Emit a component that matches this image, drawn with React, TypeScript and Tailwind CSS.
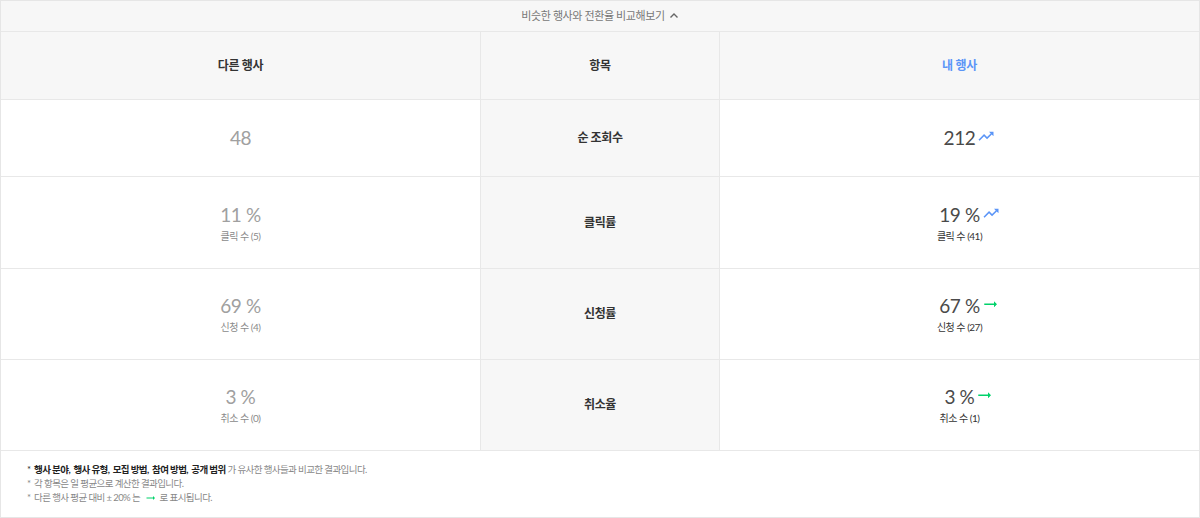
import React from "react";

const font = { fontFamily: "Lato, 'Noto Sans CJK KR', 'Noto Sans', sans-serif" };

function TrendUp() {
  return (
    <svg width="18" height="18" viewBox="0 0 24 24" className="absolute left-full top-1/2 -translate-y-[60%] ml-[2px]">
      <path d="M16 6l2.29 2.29-4.88 4.88-4-4L2 16.59 3.41 18l6-6 4 4 6.3-6.29L22 12V6z" fill="#5b95f7" />
    </svg>
  );
}

function ArrowRight() {
  return (
    <svg width="18" height="18" viewBox="0 0 24 24" className="absolute left-full top-1/2 -translate-y-[60%] ml-[2px]">
      <path d="M16.01 11H3v2h13.01v3L20 12l-3.99-4z" fill="#00d26a" />
    </svg>
  );
}

type Row = {
  label: string;
  other: string;
  otherSub?: string;
  mine: string;
  mineSub?: string;
  icon: "up" | "right";
  h: string;
};

const rows: Row[] = [
  { label: "순 조회수", other: "48", mine: "212", icon: "up", h: "h-[77px]" },
  { label: "클릭률", other: "11 %", otherSub: "클릭 수 (5)", mine: "19 %", mineSub: "클릭 수 (41)", icon: "up", h: "h-[92px]" },
  { label: "신청률", other: "69 %", otherSub: "신청 수 (4)", mine: "67 %", mineSub: "신청 수 (27)", icon: "right", h: "h-[91px]" },
  { label: "취소율", other: "3 %", otherSub: "취소 수 (0)", mine: "3 %", mineSub: "취소 수 (1)", icon: "right", h: "h-[91px]" },
];

export default function App() {
  return (
    <div className="w-[1200px] h-[518px] bg-white" style={font}>
      <div className="border border-[#e6e6e6] h-[518px] flex flex-col">
        <div className="h-[31px] bg-[#f7f7f7] border-b border-[#e8e8e8] flex items-center justify-center text-[11px] tracking-[-0.4px] text-[#777] gap-1">
          <span>비슷한 행사와 전환율 비교해보기</span>
          <svg width="10" height="10" viewBox="0 0 10 10" className="mt-[-1px]">
            <path d="M1.5 6.5L5 3l3.5 3.5" stroke="#666" strokeWidth="1.4" fill="none" />
          </svg>
        </div>
        <div className="grid grid-cols-[480px_239px_1fr] h-[68px] bg-[#f7f7f7] border-b border-[#e8e8e8] text-[12px] tracking-[-0.3px] font-bold">
          <div className="border-r border-[#e8e8e8] flex items-center justify-center text-[#333]">다른 행사</div>
          <div className="border-r border-[#e8e8e8] flex items-center justify-center text-[#333]">항목</div>
          <div className="flex items-center justify-center text-[#5b95f7]">내 행사</div>
        </div>
        {rows.map((r) => (
          <div key={r.label} className={`grid grid-cols-[480px_239px_1fr] ${r.h} border-b border-[#e8e8e8]`}>
            <div className="border-r border-[#e8e8e8] flex flex-col items-center justify-center">
              <div className="text-[19px] leading-[24px] tracking-[-0.4px] text-[#a0a0a0]">{r.other}</div>
              {r.otherSub && <div className="text-[10px] leading-[14px] tracking-[-0.5px] mt-[2px] text-[#8a8a8a]">{r.otherSub}</div>}
            </div>
            <div className="border-r border-[#e8e8e8] bg-[#f7f7f7] flex items-center justify-center text-[12px] tracking-[-0.4px] font-bold text-[#333]">
              {r.label}
            </div>
            <div className="flex flex-col items-center justify-center">
              <div className="relative text-[19px] leading-[24px] tracking-[-0.4px] text-[#4a4a4a]">
                {r.mine}
                {r.icon === "up" ? <TrendUp /> : <ArrowRight />}
              </div>
              {r.mineSub && <div className="text-[10px] leading-[14px] tracking-[-0.5px] mt-[2px] text-[#333]">{r.mineSub}</div>}
            </div>
          </div>
        ))}
        <div className="flex-1 pl-[26px] pt-[12px] text-[9.5px] leading-[14px] tracking-[-0.6px] text-[#888]">
          <div>
            <span className="text-[#333]">*&nbsp;&nbsp;</span>
            <span className="font-bold text-[#222]">행사 분야,&nbsp; 행사 유형,&nbsp; 모집 방법,&nbsp; 참여 방법,&nbsp; 공개 범위</span>
            <span> 가 유사한 행사들과 비교한 결과입니다.</span>
          </div>
          <div>*&nbsp;&nbsp;각 항목은 일 평균으로 계산한 결과입니다.</div>
          <div className="flex items-center">
            <span>*&nbsp;&nbsp;다른 행사 평균 대비 ± 20% 는&nbsp;&nbsp;</span>
            <svg width="12" height="12" viewBox="0 0 24 24" className="mx-[1px]">
              <path d="M16.01 11H3v2h13.01v3L20 12l-3.99-4z" fill="#00d26a" />
            </svg>
            <span>&nbsp;로 표시됩니다.</span>
          </div>
        </div>
      </div>
    </div>
  );
}
